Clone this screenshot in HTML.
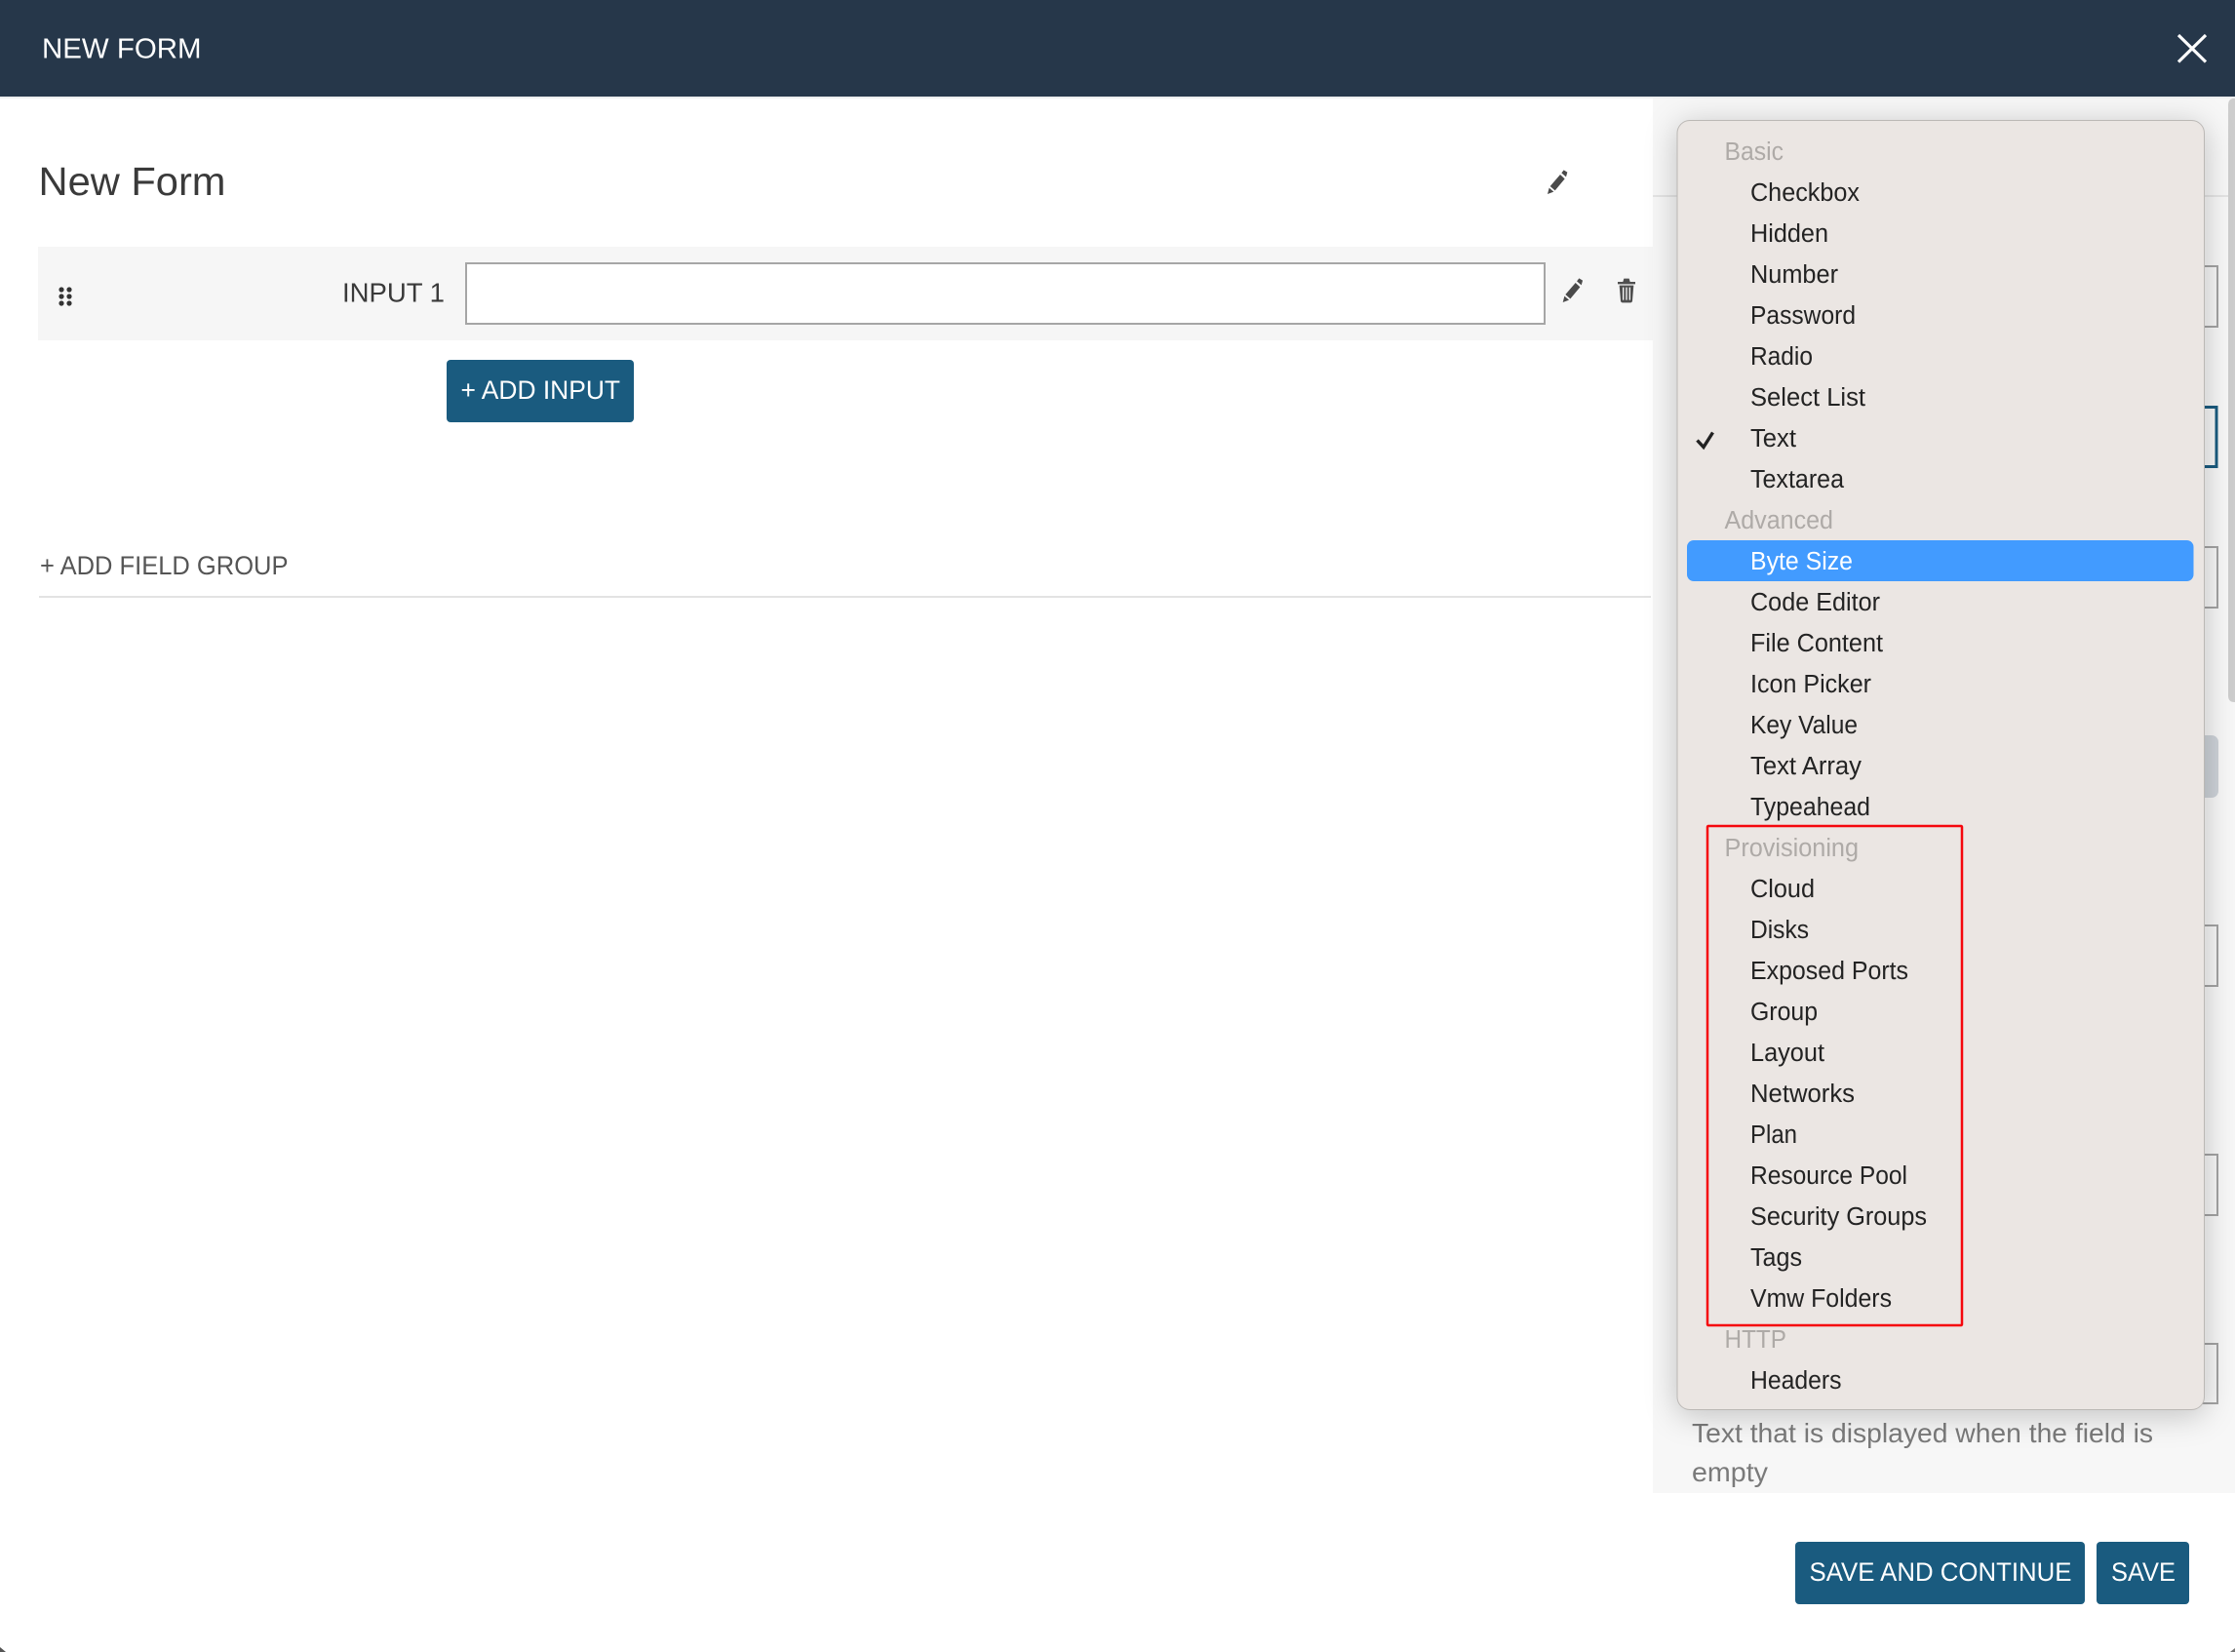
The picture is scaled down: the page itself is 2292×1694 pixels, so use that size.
<!DOCTYPE html>
<html lang="en">
<head>
<meta charset="utf-8">
<title>New Form</title>
<style>
html,body{margin:0;padding:0;background:#fff;width:2292px;height:1694px;overflow:hidden}
svg{display:block}
text{font-family:"Liberation Sans",sans-serif}
.m{font-size:25.5px;fill:#232323}
.s{font-size:25.5px;fill:#aeaaa7}
</style>
</head>
<body>
<svg xmlns="http://www.w3.org/2000/svg" width="2292" height="1694" viewBox="0 0 2292 1694">
<rect width="2292" height="1694" fill="#fff"/>
<!-- corners -->
<polygon points="0,1689 6,1694 0,1694" fill="#555"/>
<polygon points="2292,1690 2287,1694 2292,1694" fill="#777"/>
<!-- header -->
<rect width="2292" height="99" fill="#26374a"/>
<rect y="99" width="2292" height="2" fill="#eceeef"/>
<text x="43" y="59.500" font-size="29" fill="#fff" textLength="163.500" lengthAdjust="spacingAndGlyphs">NEW FORM</text>
<path d="M2234 36L2262 63.500M2262 36L2234 63.500" stroke="#fff" stroke-width="3.200" fill="none"/>

<!-- left -->
<text x="39.500" y="200" font-size="41" fill="#3a3a3a" textLength="192" lengthAdjust="spacingAndGlyphs">New Form</text>
<g id="pen" transform="translate(1570,165) scale(.3333)" fill="#4a4a4a">
<polygon points="51,102 56,83 70,95"/>
<polygon points="59,78 90,42 104,55 74,91"/>
<polygon points="94,37 101,28 112,35 108,49"/>
</g>
<rect x="39" y="253" width="1656" height="96" fill="#f6f6f6"/>
<g fill="#333">
<circle cx="63" cy="297" r="2.600"/><circle cx="71" cy="297" r="2.600"/>
<circle cx="63" cy="304" r="2.600"/><circle cx="71" cy="304" r="2.600"/>
<circle cx="63" cy="311" r="2.600"/><circle cx="71" cy="311" r="2.600"/>
</g>
<text x="351" y="309.500" font-size="28" fill="#3a3a3a" textLength="105" lengthAdjust="spacingAndGlyphs">INPUT 1</text>
<rect x="478" y="270" width="1106" height="62" fill="#fff" stroke="#a6a6a6" stroke-width="2"/>
<g transform="translate(1585.700,276) scale(.3333)" fill="#4a4a4a">
<polygon points="51,102 56,83 70,95"/>
<polygon points="59,78 90,42 104,55 74,91"/>
<polygon points="94,37 101,28 112,35 108,49"/>
</g>
<g transform="translate(1570,165) scale(.3333)">
<path d="M283 372 L286 362 H302 L305 372 H321 V379 H267 V372 Z" fill="#4f4f4f"/>
<path d="M272 383 H316 L312 431 Q311 436 306 436 H282 Q277 436 276 431 Z" fill="#4f4f4f"/>
<path d="M284 389 V428 M294 389 V428 M304 389 V428" stroke="#f6f6f6" stroke-width="4"/>
</g>
<rect x="458" y="369" width="192" height="64" rx="4" fill="#1a5b7f"/>
<text x="472.500" y="409" font-size="27" fill="#fff" textLength="163.500" lengthAdjust="spacingAndGlyphs">+ ADD INPUT</text>
<text x="41" y="589" font-size="27" fill="#555" textLength="254.500" lengthAdjust="spacingAndGlyphs">+ ADD FIELD GROUP</text>
<rect x="40" y="611" width="1653" height="2" fill="#e3e3e3"/>

<!-- right panel -->
<rect x="1695" y="101" width="597" height="1430" fill="#f7f7f7"/>
<rect x="1695" y="200" width="590" height="2" fill="#e4e4e4"/>
<g fill="none" stroke="#a3a3a3" stroke-width="2">
<rect x="1740" y="273" width="534" height="62"/>
<rect x="1740" y="561" width="534" height="62"/>
<rect x="1740" y="949" width="534" height="62"/>
<rect x="1740" y="1184" width="534" height="62"/>
<rect x="1740" y="1378" width="534" height="61"/>
</g>
<rect x="1740" y="417.500" width="533" height="61" fill="none" stroke="#1a5b7f" stroke-width="3"/>
<rect x="1740" y="754" width="535" height="64" rx="7" fill="#cdd2d8"/>
<path d="M2292 101H2291Q2285 101 2285 108V713Q2285 720 2291 720H2292Z" fill="#cdcdcd"/>
<text x="1735" y="1479" font-size="28" fill="#7a7a7a" textLength="473" lengthAdjust="spacingAndGlyphs">Text that is displayed when the field is</text>
<text x="1735" y="1519" font-size="28" fill="#7a7a7a" textLength="78" lengthAdjust="spacingAndGlyphs">empty</text>

<!-- buttons -->
<rect x="1841" y="1581" width="297" height="64" rx="4" fill="#1a5b7f"/>
<text x="1855.500" y="1621" font-size="27" fill="#fff" textLength="269" lengthAdjust="spacingAndGlyphs">SAVE AND CONTINUE</text>
<rect x="2150" y="1581" width="95" height="64" rx="4" fill="#1a5b7f"/>
<text x="2165" y="1621" font-size="27" fill="#fff" textLength="66" lengthAdjust="spacingAndGlyphs">SAVE</text>

<!-- menu -->
<rect x="1720" y="123.500" width="540.500" height="1322" rx="13" fill="#ebe6e3" stroke="#bbb8b5" stroke-width="1" style="filter:drop-shadow(0 5px 16px rgba(0,0,0,.22))"/>
<rect x="1730" y="554" width="519.500" height="42" rx="7" fill="#429bff"/>
<path d="M1740.500 451.500L1747 458.500L1756.500 443.500" fill="none" stroke="#222" stroke-width="3.400"/>

<text class="s" x="1768.500" y="164" textLength="60.500" lengthAdjust="spacingAndGlyphs">Basic</text>
<text class="m" x="1795" y="206" textLength="112" lengthAdjust="spacingAndGlyphs">Checkbox</text>
<text class="m" x="1795" y="248" textLength="80" lengthAdjust="spacingAndGlyphs">Hidden</text>
<text class="m" x="1795" y="290" textLength="90" lengthAdjust="spacingAndGlyphs">Number</text>
<text class="m" x="1795" y="332" textLength="108" lengthAdjust="spacingAndGlyphs">Password</text>
<text class="m" x="1795" y="374" textLength="64" lengthAdjust="spacingAndGlyphs">Radio</text>
<text class="m" x="1795" y="416" textLength="118" lengthAdjust="spacingAndGlyphs">Select List</text>
<text class="m" x="1795" y="458" textLength="47" lengthAdjust="spacingAndGlyphs">Text</text>
<text class="m" x="1795" y="500" textLength="96" lengthAdjust="spacingAndGlyphs">Textarea</text>
<text class="s" x="1768.500" y="542" textLength="111.500" lengthAdjust="spacingAndGlyphs">Advanced</text>
<text class="m" x="1795" y="584" textLength="105" lengthAdjust="spacingAndGlyphs" style="fill:#fff">Byte Size</text>
<text class="m" x="1795" y="626" textLength="133" lengthAdjust="spacingAndGlyphs">Code Editor</text>
<text class="m" x="1795" y="668" textLength="136" lengthAdjust="spacingAndGlyphs">File Content</text>
<text class="m" x="1795" y="710" textLength="124" lengthAdjust="spacingAndGlyphs">Icon Picker</text>
<text class="m" x="1795" y="752" textLength="110" lengthAdjust="spacingAndGlyphs">Key Value</text>
<text class="m" x="1795" y="794" textLength="114" lengthAdjust="spacingAndGlyphs">Text Array</text>
<text class="m" x="1795" y="836" textLength="123" lengthAdjust="spacingAndGlyphs">Typeahead</text>
<text class="s" x="1768.500" y="878" textLength="137.500" lengthAdjust="spacingAndGlyphs">Provisioning</text>
<text class="m" x="1795" y="920" textLength="66" lengthAdjust="spacingAndGlyphs">Cloud</text>
<text class="m" x="1795" y="962" textLength="60" lengthAdjust="spacingAndGlyphs">Disks</text>
<text class="m" x="1795" y="1004" textLength="162" lengthAdjust="spacingAndGlyphs">Exposed Ports</text>
<text class="m" x="1795" y="1046" textLength="69" lengthAdjust="spacingAndGlyphs">Group</text>
<text class="m" x="1795" y="1088" textLength="76" lengthAdjust="spacingAndGlyphs">Layout</text>
<text class="m" x="1795" y="1130" textLength="107" lengthAdjust="spacingAndGlyphs">Networks</text>
<text class="m" x="1795" y="1172" textLength="48" lengthAdjust="spacingAndGlyphs">Plan</text>
<text class="m" x="1795" y="1214" textLength="161" lengthAdjust="spacingAndGlyphs">Resource Pool</text>
<text class="m" x="1795" y="1256" textLength="181" lengthAdjust="spacingAndGlyphs">Security Groups</text>
<text class="m" x="1795" y="1298" textLength="53" lengthAdjust="spacingAndGlyphs">Tags</text>
<text class="m" x="1795" y="1340" textLength="145" lengthAdjust="spacingAndGlyphs">Vmw Folders</text>
<text class="s" x="1768.500" y="1382" textLength="63.500" lengthAdjust="spacingAndGlyphs">HTTP</text>
<text class="m" x="1795" y="1424" textLength="93.500" lengthAdjust="spacingAndGlyphs">Headers</text>

<!-- annotation -->
<rect x="1751" y="847" width="261" height="512" rx="1" fill="none" stroke="#f5070d" stroke-width="2.500"/>
</svg>
</body>
</html>
